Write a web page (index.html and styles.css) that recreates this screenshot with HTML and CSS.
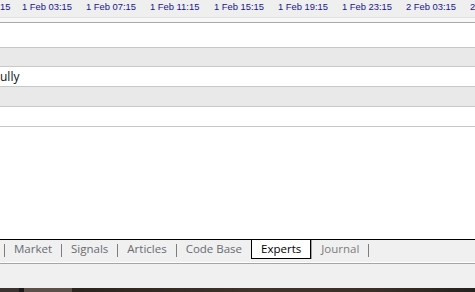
FILE: index.html
```html
<!DOCTYPE html>
<html lang="en">

<head>
    <meta charset="UTF-8">
    <meta name="viewport" content="width=device-width, initial-scale=1.0">
    <title>Toolbox - Experts</title>
    <link rel="stylesheet" href="styles.css">
</head>

<body>
    <div class="axis">
        <span class="tick first">15</span>
        <span class="tick">1 Feb 03:15</span>
        <span class="tick">1 Feb 07:15</span>
        <span class="tick">1 Feb 11:15</span>
        <span class="tick">1 Feb 15:15</span>
        <span class="tick">1 Feb 19:15</span>
        <span class="tick">1 Feb 23:15</span>
        <span class="tick">2 Feb 03:15</span>
        <span class="tick">2</span>
    </div>

    <div class="log">
        <div class="row tall"></div>
        <div class="row alt short"></div>
        <div class="row"><span class="msg">ully</span></div>
        <div class="row alt"></div>
        <div class="row"></div>
    </div>

    <div class="tabbar">
        <i class="sep"></i>
        <span class="tab">Market</span>
        <i class="sep"></i>
        <span class="tab">Signals</span>
        <i class="sep"></i>
        <span class="tab">Articles</span>
        <i class="sep"></i>
        <span class="tab">Code Base</span>
        <span class="tab active">Experts</span>
        <span class="tab dim">Journal</span>
        <i class="sep"></i>
    </div>

    <div class="status"></div>

    <div class="desktop">
        <div class="seg a"></div>
        <div class="seg b"></div>
        <div class="seg c"></div>
        <div class="seg d"></div>
    </div>
</body>

</html>
```

FILE: styles.css
```css
body {
    margin: 0;
    background-color: #fff;
    font-family: "Open Sans", "Liberation Sans", sans-serif;
    font-size: 11.5px;
    color: #000;
    overflow: hidden;
    height: 292px;
    display: flex;
    flex-direction: column;
}

/* time axis on top */
.axis {
    height: 17px;
    line-height: 14px;
    background-color: #efefef;
    border-bottom: 1px solid #e2e2e2;
    display: flex;
    white-space: nowrap;
    overflow: hidden;
    font-family: "Liberation Sans", sans-serif;
    font-size: 9.4px;
    color: #15158e;
    flex-shrink: 0;
}

.tick {
    flex: 0 0 64px;
}

.tick.first {
    flex-basis: 22px;
}

.log {
    border-top: 4px solid #f8f8f8;
    flex-shrink: 0;
}

.log .row {
    height: 19px;
    border-top: 1px solid #a9a9a9;
    background-color: #fff;
    line-height: 19px;
}

.log .row + .row {
    border-top-color: #c8c8c8;
}

.log .row.tall {
    height: 24px;
}

.log .row.short {
    height: 18px;
}

.log .row.alt {
    background-color: #e9e9e9;
}

.log .row:last-child {
    border-bottom: 1px solid #c8c8c8;
}

.msg {
    color: #111;
    font-size: 12px;
}

/* tabs at the bottom, pushed down by the empty list space */
.tabbar {
    margin-top: auto;
    height: 22px;
    padding-left: 4px;
    border-top: 1px solid #000;
    border-bottom: 1px solid #fff;
    background-color: #f0f0f0;
    display: flex;
    align-items: flex-start;
    flex-shrink: 0;
}

.tab {
    padding: 0 9px;
    line-height: 18px;
    color: #676c72;
    white-space: nowrap;
}

.tab.active {
    background-color: #fff;
    color: #000;
    border: 1px solid #000;
    border-top: none;
    box-shadow: 1px 0 0 #a0a0a0;
    margin-right: 1px;
}

.tab.dim {
    color: #7c7c7c;
}

.sep {
    width: 1px;
    height: 13px;
    margin-top: 4px;
    background-color: #7d7d7d;
}

.status {
    height: 24px;
    border-top: 1px solid #a5a5a5;
    background-color: #f0f0f0;
    flex-shrink: 0;
}

.desktop {
    height: 4px;
    display: flex;
    flex-shrink: 0;
}

.seg.a {
    width: 19px;
    background-color: #3b3331;
}

.seg.b {
    width: 5px;
    background-color: #1c1a19;
}

.seg.c {
    width: 48px;
    background-color: #5b504a;
}

.seg.d {
    flex: 1;
    background: linear-gradient(90deg, #2b241f 0%, #3e3429 45%, #3a3026 75%, #262220 100%);
}
```
